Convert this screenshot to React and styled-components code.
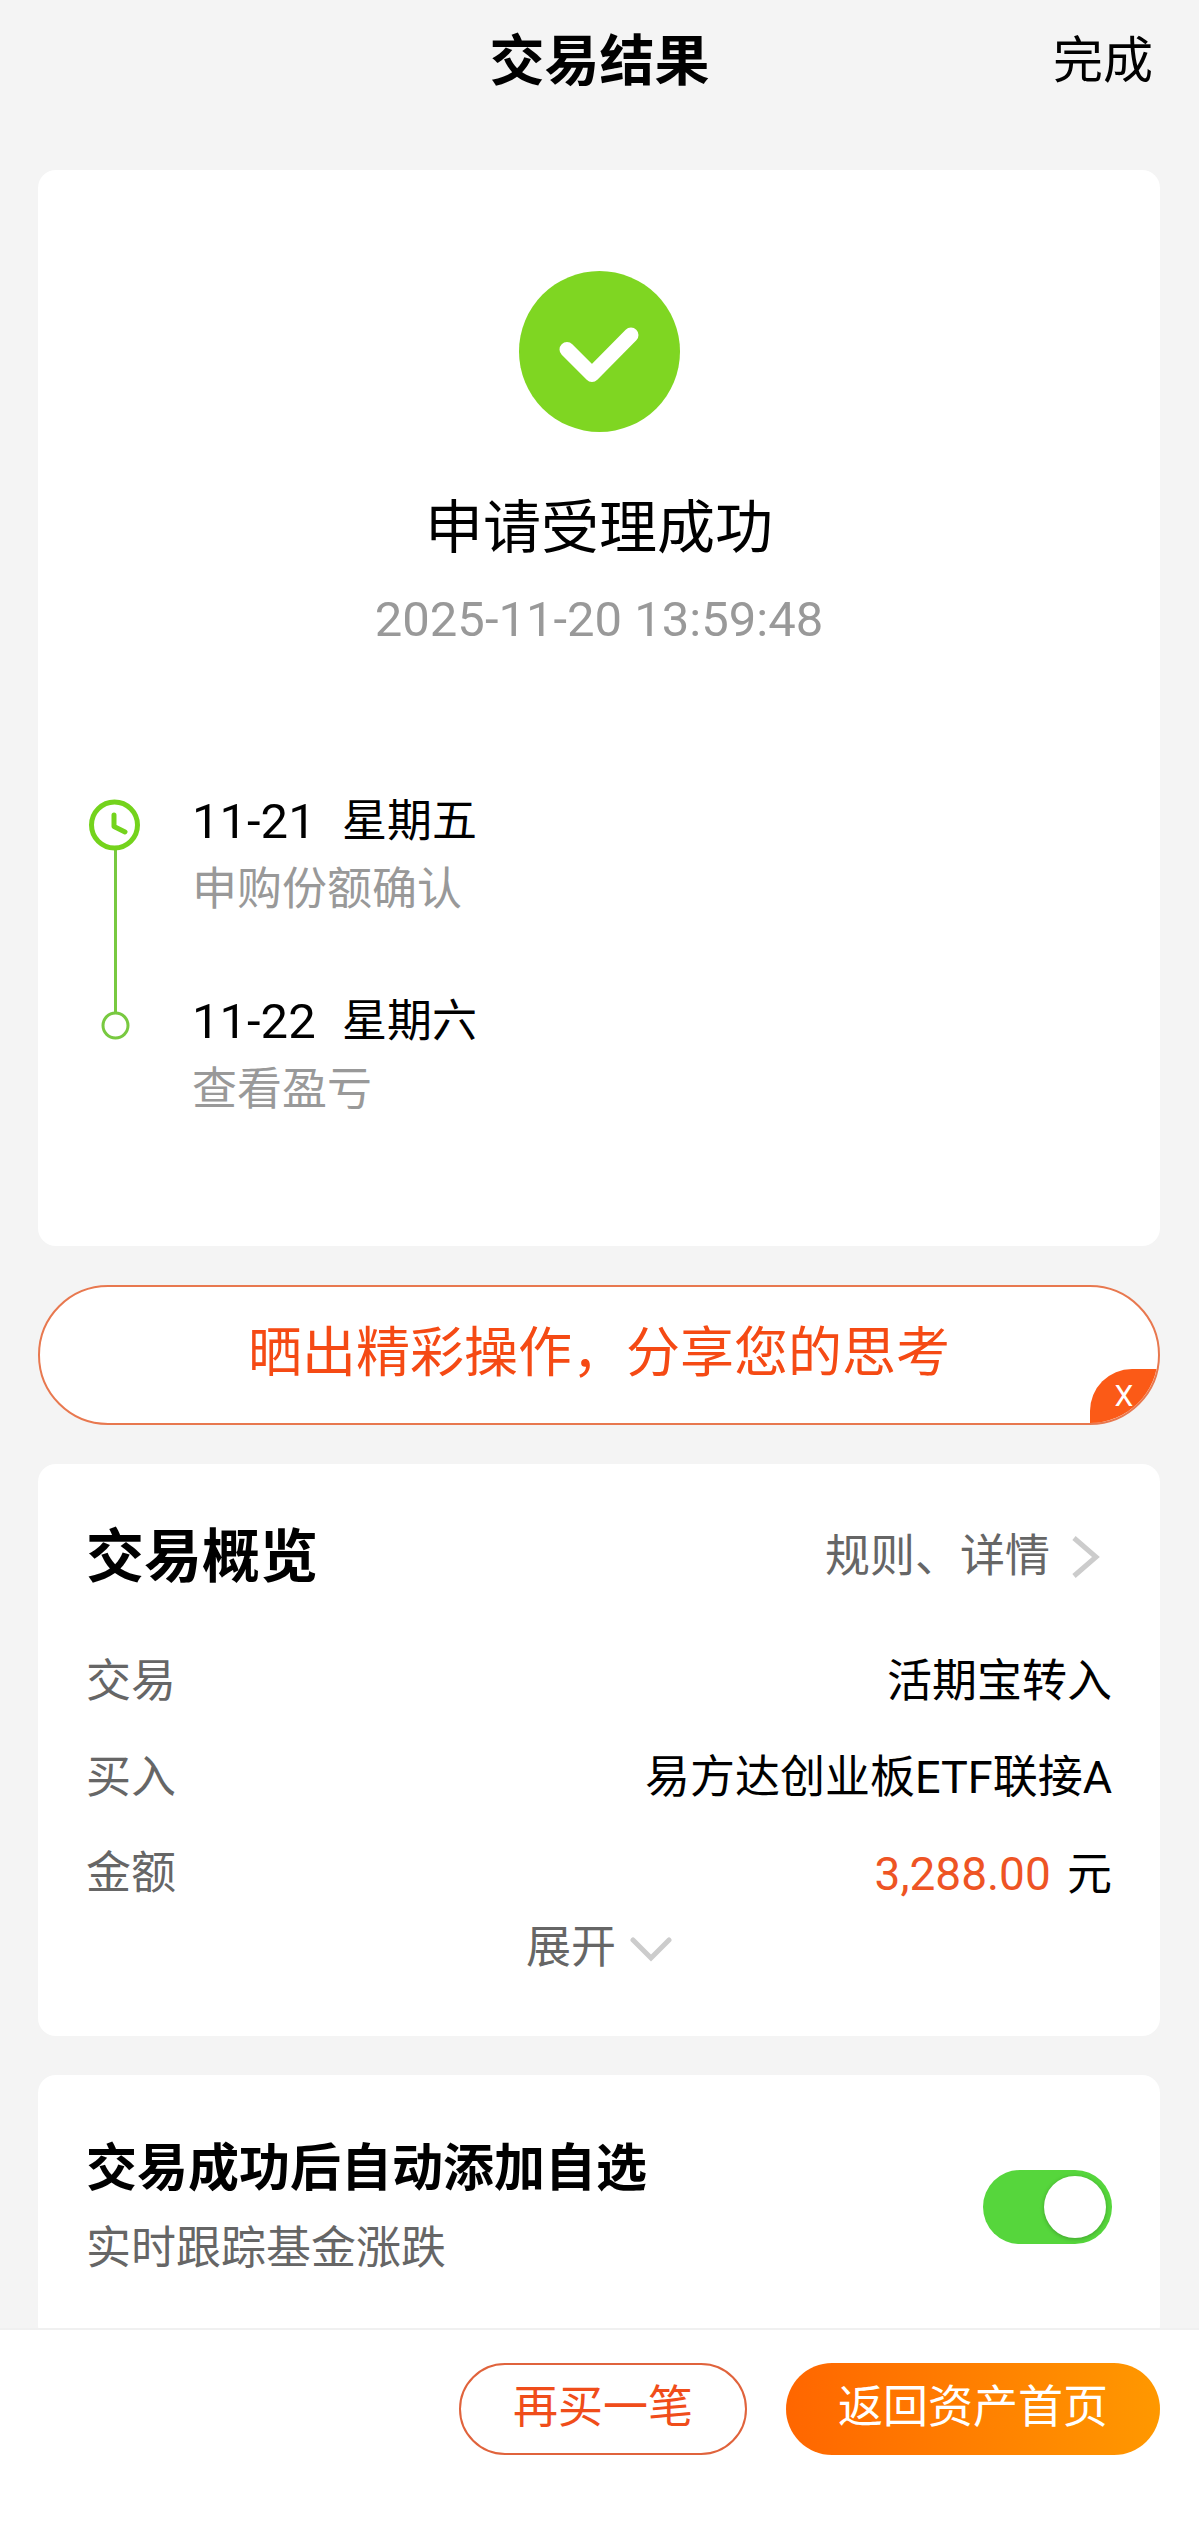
import { useState } from "react";
import styled, { createGlobalStyle } from "styled-components";

const GlobalStyle = createGlobalStyle`
  * {
    box-sizing: border-box;
  }

  body {
    margin: 0;
    background: #f4f4f4;
    color: #000;
    font-family: Roboto, "Noto Sans CJK SC", sans-serif;
    font-size: 45px;
    line-height: 60px;
  }

  h1,
  h2,
  p,
  ol,
  dl,
  dd {
    margin: 0;
    padding: 0;
  }

  button {
    padding: 0;
    border: 0;
    background: none;
    color: inherit;
    font: inherit;
    cursor: pointer;
  }
`;

const Page = styled.div`
  padding-bottom: 180px;
`;

const Header = styled.header`
  display: grid;
  grid-template-columns: 1fr auto 1fr;
  align-items: center;
  height: 122px;
  margin-bottom: 48px;
  padding: 0 46px;
`;

const PageTitle = styled.h1`
  grid-column: 2;
  font-size: 55px;
  font-weight: 700;
`;

const DoneButton = styled.button`
  justify-self: end;
  font-size: 50px;
`;

const Main = styled.main`
  display: flex;
  flex-direction: column;
  gap: 39px;
  padding: 0 39px 0 38px;
`;

const Card = styled.section`
  padding: ${(props) => props.$padding};
  border-radius: 18px;
  background: #fff;
`;

const Status = styled.div`
  display: flex;
  flex-direction: column;
  align-items: center;
  margin-bottom: 142px;
`;

const StatusTitle = styled.h2`
  margin: 60px 0 28px;
  font-size: 58px;
  font-weight: 400;
  line-height: 72px;
`;

const StatusTime = styled.time`
  color: #999;
  font-size: 49px;
  line-height: 56px;
`;

const Timeline = styled.ol`
  list-style: none;
`;

const Rail = styled.div`
  position: relative;
  width: 58px;

  svg {
    position: relative;
    display: block;
    width: 58px;
    height: 70px;
  }
`;

const Step = styled.li`
  display: flex;
  gap: 48px;

  &:not(:last-child) ${Rail}::before {
    content: "";
    position: absolute;
    top: 35px;
    left: 28px;
    width: 3px;
    height: 100%;
    background: #78c940;
  }
`;

const StepBody = styled.div`
  padding: 2px 0 70px;
`;

const StepDate = styled.p`
  display: flex;
  margin-bottom: 8px;

  time {
    min-width: 150px;
    font-size: 49px;
  }
`;

const StepText = styled.p`
  color: #999;
`;

const ShareBar = styled.div`
  position: relative;
  height: 140px;
  overflow: hidden;
  border: 2px solid #e8784f;
  border-radius: 70px;
  background: #fff;
`;

const ShareButton = styled.button`
  width: 100%;
  height: 100%;
  padding-bottom: 2px;
  color: #f54a14;
  font-size: 54px;
`;

const CloseButton = styled.button`
  position: absolute;
  right: 0;
  bottom: 0;
  width: 68px;
  height: 54px;
  border-radius: 42px 0 0 0;
  background: #fb5a17;
  color: #fff;
  font-size: 30px;
  line-height: 54px;
`;

const CardHeader = styled.div`
  display: flex;
  align-items: center;
  justify-content: space-between;
  margin-bottom: 37px;
`;

const CardTitle = styled.h2`
  font-size: 58px;
  font-weight: 700;
  line-height: 80px;
`;

const DetailLink = styled.a`
  display: flex;
  align-items: center;
  gap: 22px;
  padding-right: 12px;
  color: #666;
  text-decoration: none;
`;

const Row = styled.div`
  display: flex;
  align-items: center;
  justify-content: space-between;
  height: 96px;

  dt {
    color: #666;
  }
`;

const Amount = styled.span`
  margin-right: 5px;
  color: #ee5424;
  font-size: 46px;
`;

const ExpandButton = styled.button`
  display: flex;
  align-items: center;
  gap: 14px;
  height: 52px;
  margin: 0 auto;
  color: #666;
`;

const SettingRow = styled.div`
  display: flex;
  align-items: center;
  justify-content: space-between;
`;

const SettingLabel = styled.label`
  display: block;
  margin-bottom: 16px;
  font-size: 51px;
  font-weight: 700;
  line-height: 68px;
`;

const SettingHint = styled.p`
  color: #666;
`;

const Switch = styled.input`
  display: flex;
  width: 129px;
  height: 74px;
  margin: 0;
  padding: 6px;
  border-radius: 37px;
  background: #d9d9d9;
  appearance: none;
  cursor: pointer;

  &::before {
    content: "";
    width: 62px;
    height: 62px;
    border-radius: 50%;
    background: #fff;
    box-shadow: 0 1px 4px rgba(0, 0, 0, 0.25);
  }

  &:checked {
    justify-content: flex-end;
    background: #56d63c;
  }
`;

const Footer = styled.footer`
  position: fixed;
  right: 0;
  bottom: 0;
  left: 0;
  display: flex;
  justify-content: flex-end;
  gap: 39px;
  padding: 33px 39px 74px;
  border-top: 2px solid #f0f0f0;
  background: #fff;
`;

const FooterButton = styled.button`
  height: 92px;
  padding: 0 52px 2px;
  border: ${(props) => (props.$primary ? "0" : "2px solid #e0633c")};
  border-radius: 46px;
  background: ${(props) =>
    props.$primary ? "linear-gradient(90deg, #ff6600, #ff9800)" : "#fff"};
  color: ${(props) => (props.$primary ? "#fff" : "#f04d1a")};
`;

const steps = [
  { date: "11-21", day: "星期五", text: "申购份额确认", icon: "clock" },
  { date: "11-22", day: "星期六", text: "查看盈亏", icon: "dot" },
];

const SuccessIcon = () => (
  <svg width="161" height="161" viewBox="0 0 161 161" aria-hidden="true">
    <circle cx="80.5" cy="80.5" r="80.5" fill="#7fd622" />
    <path
      d="M48 78.5 L73 103.5 L112 64"
      fill="none"
      stroke="#fff"
      strokeWidth="15"
      strokeLinecap="round"
      strokeLinejoin="round"
    />
  </svg>
);

const ClockIcon = () => (
  <svg viewBox="0 0 58 70" fill="none" stroke="#74d31c" aria-hidden="true">
    <circle cx="28.5" cy="35" r="23" fill="#fff" strokeWidth="5" />
    <path
      d="M28 25 V36.5 L39 42"
      strokeWidth="5"
      strokeLinecap="round"
      strokeLinejoin="round"
    />
  </svg>
);

const DotIcon = () => (
  <svg viewBox="0 0 58 70" aria-hidden="true">
    <circle
      cx="29.5"
      cy="35.5"
      r="12.5"
      fill="#fff"
      stroke="#78c940"
      strokeWidth="3"
    />
  </svg>
);

const ChevronRight = () => (
  <svg width="28" height="44" viewBox="0 0 28 44" aria-hidden="true">
    <path d="M2 3 L24 22 L2 41" fill="none" stroke="#ccc" strokeWidth="5" />
  </svg>
);

const ChevronDown = ({ open }) => (
  <svg width="42" height="28" viewBox="0 0 42 28" aria-hidden="true">
    <path
      d={open ? "M3 24 L21 6 L39 24" : "M3 6 L21 24 L39 6"}
      fill="none"
      stroke="#ccc"
      strokeWidth="5"
      strokeLinecap="round"
    />
  </svg>
);

const App = () => {
  const [showShare, setShowShare] = useState(true);
  const [open, setOpen] = useState(false);
  const [watch, setWatch] = useState(true);

  return (
    <>
      <GlobalStyle />
      <Page lang="zh-CN">
        <Header>
          <PageTitle>交易结果</PageTitle>
          <DoneButton type="button">完成</DoneButton>
        </Header>

        <Main>
          <Card $padding="101px 48px 56px">
            <Status>
              <SuccessIcon />
              <StatusTitle>申请受理成功</StatusTitle>
              <StatusTime>2025-11-20 13:59:48</StatusTime>
            </Status>
            <Timeline>
              {steps.map((step) => (
                <Step key={step.date}>
                  <Rail>
                    {step.icon === "clock" ? <ClockIcon /> : <DotIcon />}
                  </Rail>
                  <StepBody>
                    <StepDate>
                      <time>{step.date}</time>
                      <span>{step.day}</span>
                    </StepDate>
                    <StepText>{step.text}</StepText>
                  </StepBody>
                </Step>
              ))}
            </Timeline>
          </Card>

          {showShare && (
            <ShareBar>
              <ShareButton type="button">
                晒出精彩操作，分享您的思考
              </ShareButton>
              <CloseButton type="button" onClick={() => setShowShare(false)}>
                X
              </CloseButton>
            </ShareBar>
          )}

          <Card $padding="53px 48px 62px">
            <CardHeader>
              <CardTitle>交易概览</CardTitle>
              <DetailLink href="#detail">
                规则、详情
                <ChevronRight />
              </DetailLink>
            </CardHeader>
            <dl>
              <Row>
                <dt>交易</dt>
                <dd>活期宝转入</dd>
              </Row>
              <Row>
                <dt>买入</dt>
                <dd>易方达创业板ETF联接A</dd>
              </Row>
              <Row>
                <dt>金额</dt>
                <dd>
                  <Amount>3,288.00</Amount> 元
                </dd>
              </Row>
            </dl>
            <ExpandButton
              type="button"
              aria-expanded={open}
              onClick={() => setOpen(!open)}
            >
              展开
              <ChevronDown open={open} />
            </ExpandButton>
          </Card>

          <Card $padding="60px 48px 64px">
            <SettingRow>
              <div>
                <SettingLabel htmlFor="watch">
                  交易成功后自动添加自选
                </SettingLabel>
                <SettingHint>实时跟踪基金涨跌</SettingHint>
              </div>
              <Switch
                id="watch"
                type="checkbox"
                checked={watch}
                onChange={(e) => setWatch(e.target.checked)}
              />
            </SettingRow>
          </Card>
        </Main>

        <Footer>
          <FooterButton type="button">再买一笔</FooterButton>
          <FooterButton type="button" $primary>
            返回资产首页
          </FooterButton>
        </Footer>
      </Page>
    </>
  );
};

export default App;
